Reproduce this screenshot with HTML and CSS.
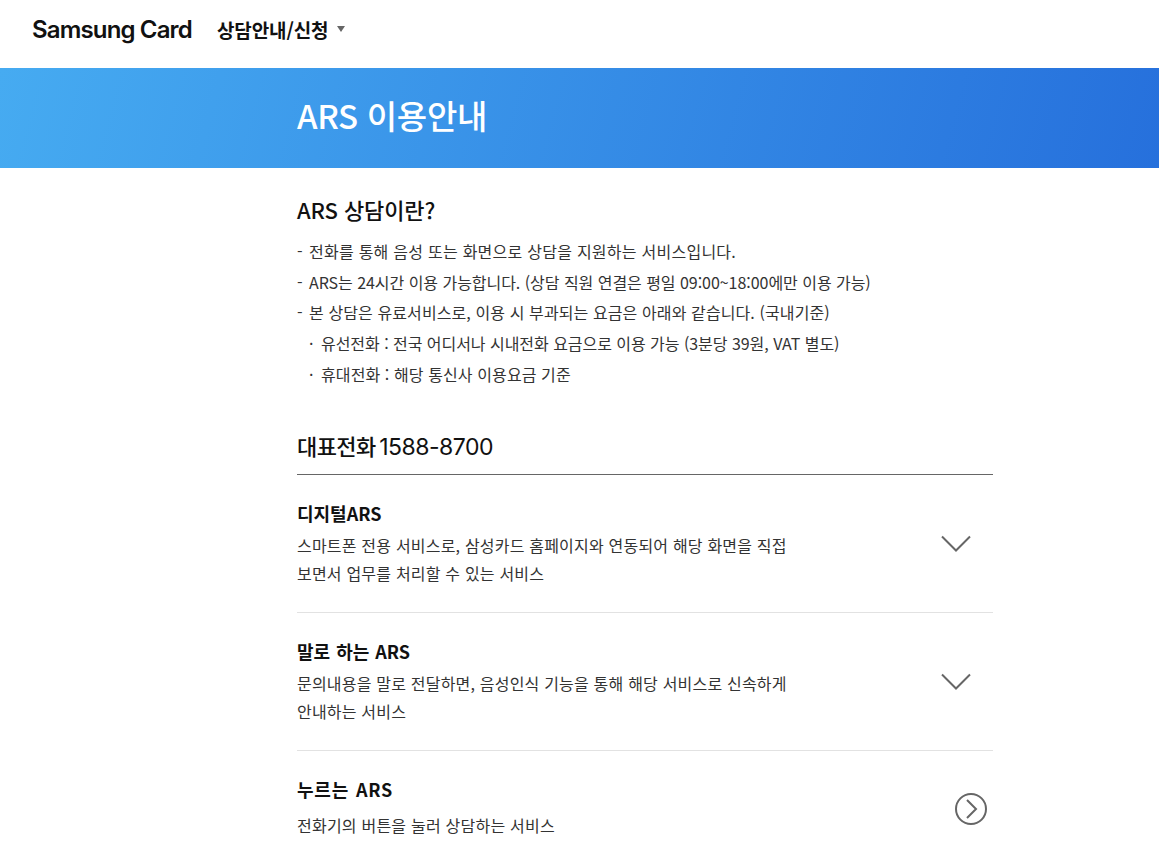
FILE: index.html
```html
<!DOCTYPE html>
<html lang="ko">
<head>
<meta charset="utf-8">
<title>ARS 이용안내</title>
<link rel="stylesheet" href="styles.css">
</head>
<body>
<header class="top">
  <span class="logo">Samsung Card</span>
  <nav class="menu"><span class="menu-label">상담안내/신청</span><span class="caret"></span></nav>
</header>
<section class="banner"><h1 class="banner-title">ARS 이용안내</h1></section>
<main class="content">
  <h2 class="intro-title">ARS 상담이란?</h2>
  <ul class="intro">
    <li class="item wide"><span class="mark">-</span>전화를 통해 음성 또는 화면으로 상담을 지원하는 서비스입니다.</li>
    <li class="item tight"><span class="mark">-</span>ARS는 24시간 이용 가능합니다. (상담 직원 연결은 평일 09:00~18:00에만 이용 가능)</li>
    <li class="item"><span class="mark">-</span>본 상담은 유료서비스로, 이용 시 부과되는 요금은 아래와 같습니다. (국내기준)</li>
    <li class="item sub tight"><span class="mark">·</span>유선전화 : 전국 어디서나 시내전화 요금으로 이용 가능 (3분당 39원, VAT 별도)</li>
    <li class="item sub"><span class="mark">·</span>휴대전화 : 해당 통신사 이용요금 기준</li>
  </ul>
  <h2 class="phone">대표전화 <span class="phone-num">1588-8700</span></h2>
  <article class="row">
    <div class="row-text">
      <h3 class="row-title">디지털ARS</h3>
      <p class="row-desc">스마트폰 전용 서비스로, 삼성카드 홈페이지와 연동되어 해당 화면을 직접<br>보면서 업무를 처리할 수 있는 서비스</p>
    </div>
    <svg class="chev" width="30" height="17" viewBox="0 0 30 17"><path d="M1 1.5 15 15.5 29 1.5" fill="none" stroke="#666" stroke-width="2"/></svg>
  </article>
  <article class="row">
    <div class="row-text">
      <h3 class="row-title">말로 하는 ARS</h3>
      <p class="row-desc">문의내용을 말로 전달하면, 음성인식 기능을 통해 해당 서비스로 신속하게<br>안내하는 서비스</p>
    </div>
    <svg class="chev" width="30" height="17" viewBox="0 0 30 17"><path d="M1 1.5 15 15.5 29 1.5" fill="none" stroke="#666" stroke-width="2"/></svg>
  </article>
  <article class="row last">
    <div class="row-text">
      <h3 class="row-title">누르는 ARS</h3>
      <p class="row-desc">전화기의 버튼을 눌러 상담하는 서비스</p>
    </div>
    <svg class="circ" width="32" height="32" viewBox="0 0 32 32"><circle cx="16" cy="16" r="15" fill="none" stroke="#666" stroke-width="2"/><path d="M12 7 21 16 12 25" fill="none" stroke="#666" stroke-width="2"/></svg>
  </article>
</main>
</body>
</html>
```
FILE: styles.css
```css
* { box-sizing: border-box; }
html, body { margin: 0; padding: 0; height: 855px; overflow: hidden; }
body { background: #fff; color: #222; font-family: "Noto Sans CJK KR", "Noto Sans", sans-serif; }
h1, h2, h3, p, ul { margin: 0; padding: 0; }
ul { list-style: none; }
.top { height: 68px; display: flex; align-items: center; padding: 0 0 10px 32px; }
.logo { font-family: Inter, "Noto Sans", sans-serif; font-size: 24px; font-weight: 600; letter-spacing: -0.85px; color: #111; }
.menu { display: flex; align-items: center; margin-left: 25px; }
.menu-label { font-size: 19px; font-weight: 700; letter-spacing: -0.1px; color: #111; }
.caret { width: 0; height: 0; margin-left: 9px; border-left: 4.5px solid transparent; border-right: 4.5px solid transparent; border-top: 6px solid #666; }
.banner { height: 100px; background: linear-gradient(105deg, #46abf1 0%, #2670dc 100%); display: flex; align-items: center; padding-left: 297px; }
.banner-title { font-size: 33px; font-weight: 500; letter-spacing: -0.3px; color: #fff; line-height: 48px; margin-top: -6px; }
.content { width: 696px; margin-left: 297px; }
.intro-title { font-size: 22px; font-weight: 500; letter-spacing: -0.1px; color: #111; line-height: 32px; margin-top: 25px; }
.intro { margin-top: 11px; font-size: 16px; color: #333; line-height: 30.7px; }
.item { letter-spacing: 0.1px; }
.item.wide { letter-spacing: 0.25px; }
.item.tight { letter-spacing: -0.04px; }
.mark { display: inline-block; width: 12px; }
.sub { padding-left: 12px; }
.phone { font-size: 22px; font-weight: 500; letter-spacing: -0.6px; word-spacing: -2px; color: #111; line-height: 32px; margin-top: 39px; padding-bottom: 11px; border-bottom: 1px solid #666; }
.phone-num { font-family: Inter, "Noto Sans", sans-serif; font-size: 23px; font-weight: 400; letter-spacing: -0.5px; }
.row { height: 138px; display: flex; justify-content: space-between; align-items: flex-start; border-bottom: 1px solid #e2e2e2; padding-top: 24px; }
.row.last { border-bottom: 0; }
.row-title { font-size: 18px; font-weight: 700; word-spacing: 1px; color: #111; line-height: 28px; }
.last .row-title { letter-spacing: 0.8px; word-spacing: 1px; }
.row-desc { font-size: 16px; letter-spacing: 0.2px; color: #333; line-height: 28px; margin-top: 4px; }
.last .row-desc { margin-top: 8px; letter-spacing: 0.22px; }
.chev { margin: 36px 22px 0 0; }
.circ { margin: 18px 6px 0 0; }
```
